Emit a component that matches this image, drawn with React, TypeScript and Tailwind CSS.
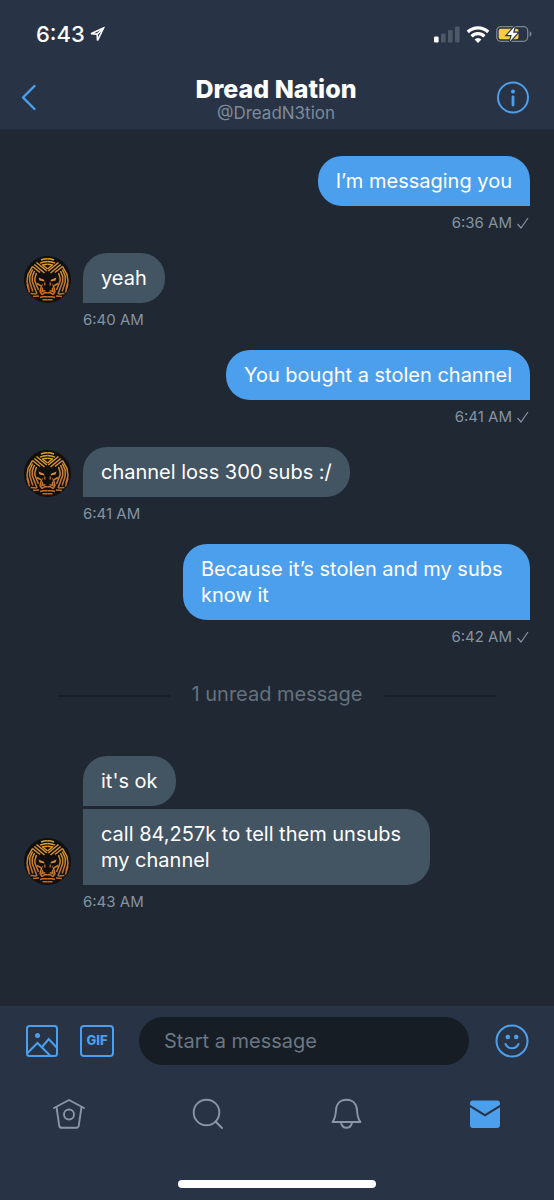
import { useId } from 'react';
import type { ReactNode } from 'react';
import clsx from 'clsx';

type Group = {
  from: 'me' | 'them';
  time: string;
  texts: string[];
};

const earlier: Group[] = [
  { from: 'me', time: '6:36 AM', texts: ['I’m messaging you'] },
  { from: 'them', time: '6:40 AM', texts: ['yeah'] },
  { from: 'me', time: '6:41 AM', texts: ['You bought a stolen channel'] },
  { from: 'them', time: '6:41 AM', texts: ['channel loss 300 subs :/'] },
  { from: 'me', time: '6:42 AM', texts: ['Because it’s stolen and my subs know it'] },
];

const unread: Group[] = [
  { from: 'them', time: '6:43 AM', texts: ["it's ok", 'call 84,257k to tell them unsubs my channel'] },
];

function LionAvatar() {
  const id = useId();
  const half = (
    <g fill="none" stroke={`url(#${id})`} strokeWidth="1.500">
      {/* crown */}
      <path d="M23.500 2.800c-2.500 0-4.500.4-6.500 1.200M23.500 5.500c-2.800 0-5 .5-7.500 1.600M23.500 8.200c-1.800 0-3 .2-4.500.7" />
      <path d="M12.500 6.500 22.800 15M10.300 8.500 20.500 17M18 8.500l5.500 4.500" />
      {/* mane */}
      <path d="M8.500 10.500 16 16.500M8.500 10.500 4 18.500l-1 7 2 8" />
      <path d="M8.600 13.500 5.800 20v6l3 9.500M10.500 15 8.300 20.500v5L13 38M12.500 17l-1.600 5v3l3.600 9" />
      <path d="M3 28l2.500 8.500M6.500 37.500l6 .5M9 40.500l6-.5" />
      {/* cheeks and chin */}
      <path d="M13 27.500 17.500 30l-1.500 5.500 2 3M19 27.500v4l-1 4 5.500-1.500M18 38.500l2.500-1.700h3M16 41.500l3-.8h4.500M18.500 43.700h5" />
    </g>
  );
  return (
    <svg viewBox="0 0 47 47" className="size-[47px] shrink-0" role="img" aria-label="Dread Nation">
      <defs>
        <linearGradient id={id} gradientUnits="userSpaceOnUse" x1="32" y1="3" x2="14" y2="44">
          <stop offset="0" stopColor="#e0a52e" />
          <stop offset="0.5" stopColor="#d28a30" />
          <stop offset="1" stopColor="#bd6429" />
        </linearGradient>
      </defs>
      <circle cx="23.500" cy="23.500" r="23.500" fill="#11100f" />
      {half}
      <g transform="matrix(-1 0 0 1 47 0)">{half}</g>
      {/* brow, bridge and nose */}
      <path
        d="M14 16.500 19.500 19l4 1.500 4-1.500 5.500-2.500 1 4.500-1.500 5-4.500 2 1 3-3 3.500-2.500 1-2.500-1-3-3.500 1-3-4.500-2-1.500-5z"
        fill="#100e0e"
      />
      <path d="m14.500 21.500 5.500 2.200.5 1.800-5-1zM32.500 21.500 27 23.700l-.5 1.800 5-1z" fill="#d98d31" />
      <path d="M20.800 26.500v3M26.200 26.500v3" stroke="#c8742a" strokeWidth="1.200" />
    </svg>
  );
}

function Bubble({ mine, joined, children }: { mine: boolean; joined: boolean; children: ReactNode }) {
  return (
    <p
      className={clsx(
        'max-w-[347px] rounded-3xl px-[18px] py-3 text-xl leading-[26px] text-white',
        mine ? 'rounded-br-none bg-[#4c9fec]' : 'rounded-bl-none bg-[#435463]',
        joined && 'rounded-tl-none',
      )}
    >
      {children}
    </p>
  );
}

function MessageGroup({ group }: { group: Group }) {
  const mine = group.from === 'me';
  return (
    <li className={clsx('flex flex-col gap-[7px]', mine && 'items-end')}>
      <div className="flex items-end gap-3">
        {!mine && <LionAvatar />}
        <div className="flex flex-col items-start gap-[3px]">
          {group.texts.map((text, i) => (
            <Bubble key={text} mine={mine} joined={i > 0}>
              {text}
            </Bubble>
          ))}
        </div>
      </div>
      <div className={clsx('flex items-center gap-1 text-[15px] leading-5 text-[#8593a1]', !mine && 'pl-[59px]')}>
        <time>{group.time}</time>
        {mine && (
          <svg viewBox="0 0 14 14" className="size-3.5" fill="none" stroke="currentColor" strokeWidth="1.200" aria-label="Sent">
            <path d="m1.500 8 3.500 4L12 2" />
          </svg>
        )}
      </div>
    </li>
  );
}

function StatusBar() {
  return (
    <div className="flex h-7 items-center justify-between pl-9 pr-[22px] text-white">
      <div className="flex items-center gap-1">
        <span className="text-[22px] font-medium leading-7">6:43</span>
        <svg viewBox="0 0 16 16" className="size-4" fill="none" stroke="currentColor" strokeWidth="1.600">
          <path d="M14.500 2 2 7.800l6.200.3.300 6.400z" />
          <path d="M14 2.500 8.400 8" />
        </svg>
      </div>
      <div className="flex items-center gap-1.5">
        <svg viewBox="0 0 26 17" className="h-[17px] w-[26px]" fill="currentColor">
          <rect y="10.500" width="4.600" height="6" rx="1.200" />
          <g fill="#4d5867">
            <rect x="7" y="7.500" width="4.600" height="9" rx="1.200" />
            <rect x="14" y="4" width="4.600" height="12.500" rx="1.200" />
            <rect x="21" y=".5" width="4.600" height="16" rx="1.200" />
          </g>
        </svg>
        <svg viewBox="0 0 24 17" className="h-[17px] w-6" fill="none" stroke="currentColor" strokeWidth="3.200">
          <path d="M1.800 6a14.500 14.500 0 0 1 20.400 0" />
          <path d="M5.600 10.300a9 9 0 0 1 12.800 0" />
          <path d="M8.600 13.500a4.600 4.600 0 0 1 6.800 0L12 16.900z" fill="currentColor" stroke="none" />
        </svg>
        <svg viewBox="0 0 36 18" className="h-[18px] w-9">
          <rect x=".7" y="1.700" width="31" height="14.600" rx="4" fill="none" stroke="#7b8490" strokeWidth="1.300" />
          <path d="M33.600 6.300c1.200.4 1.900 1.400 1.900 2.700s-.7 2.300-1.900 2.700z" fill="#7b8490" />
          <rect x="2.700" y="3.700" width="19.800" height="10.600" rx="2" fill="#f8cd3e" />
          <path
            d="M18.800 1.500 11.200 10h4.600l-2 6.500 7.900-8.700h-4.700z"
            fill="#fff"
            stroke="#283445"
            strokeWidth="2.400"
            paintOrder="stroke"
          />
        </svg>
      </div>
    </div>
  );
}

function ChatHeader() {
  return (
    <header className="border-b border-[#222d3a] bg-[#283445] pt-5 pb-1.5">
      <StatusBar />
      <div className="mt-[27px] flex items-start justify-between pl-5 pr-6">
        <button type="button" aria-label="Back" className="mt-2 flex w-9 text-[#4c9fec]">
          <svg viewBox="0 0 18 28" className="h-7 w-[18px]" fill="none" stroke="currentColor" strokeWidth="2.400" strokeLinecap="round" strokeLinejoin="round">
            <path d="M14.500 3 3 14.500 14.500 26" />
          </svg>
        </button>
        <div className="text-center">
          <h1 className="text-[25px] font-extrabold leading-7 text-white">Dread Nation</h1>
          <p className="text-[17px] leading-5 text-[#7d8a99]">@DreadN3tion</p>
        </div>
        <button type="button" aria-label="Conversation info" className="mt-1.5 flex text-[#4c9fec]">
          <svg viewBox="0 0 34 34" className="size-[34px]" fill="none" stroke="currentColor" strokeWidth="2">
            <circle cx="17" cy="16.500" r="15" />
            <circle cx="17" cy="10.500" r="2" fill="currentColor" stroke="none" />
            <path d="M17 16v8" strokeWidth="2.800" strokeLinecap="round" />
          </svg>
        </button>
      </div>
    </header>
  );
}

function Composer() {
  return (
    <form className="flex items-center pl-[25px] pr-6">
      <button type="button" aria-label="Add photo" className="text-[#4c9fec]">
        <svg viewBox="0 0 34 34" className="size-[34px]" fill="none" stroke="currentColor" strokeWidth="2">
          <rect x="2" y="2" width="30" height="30" rx="2.500" />
          <circle cx="12.500" cy="11.500" r="2.500" fill="currentColor" stroke="none" />
          <path d="M2.500 29 12.500 19 25 31.500M17.500 22.500l6.200-7.500 8 8.500" />
        </svg>
      </button>
      <button
        type="button"
        className="ml-[21px] flex h-8 w-[34px] items-center justify-center rounded-[4px] border-2 border-[#4c9fec] text-[13px] font-extrabold text-[#4c9fec]"
      >
        GIF
      </button>
      <input
        type="text"
        aria-label="Start a message"
        placeholder="Start a message"
        className="ml-[25px] h-12 min-w-0 flex-1 rounded-full bg-[#161d25] px-[25px] text-xl text-white outline-none placeholder:text-[#6b7784]"
      />
      <button type="button" aria-label="Emoji" className="ml-[25px] text-[#4c9fec]">
        <svg viewBox="0 0 36 36" className="size-9" fill="none" stroke="currentColor" strokeWidth="2">
          <circle cx="18" cy="18" r="15.500" />
          <circle cx="13.800" cy="14" r="2.300" fill="currentColor" stroke="none" />
          <circle cx="22.200" cy="14" r="2.300" fill="currentColor" stroke="none" />
          <path d="M11.500 21c1.500 3 3.700 4.300 6.500 4.300s5-1.300 6.500-4.300" strokeLinecap="round" />
        </svg>
      </button>
    </form>
  );
}

function TabBar() {
  return (
    <nav className="mt-8 grid grid-cols-4 justify-items-center text-[#8996a6]">
      <a href="#home" aria-label="Home">
        <svg viewBox="0 0 34 34" className="size-[34px]" fill="none" stroke="currentColor" strokeWidth="1.900" strokeLinecap="round" strokeLinejoin="round">
          <path d="M2 11 17 3l15 8" />
          <path d="M4.500 10 7.200 28.500q.3 2.300 2.300 2.300h15q2 0 2.300-2.300L29.500 10" />
          <circle cx="17" cy="17.500" r="5" />
        </svg>
      </a>
      <a href="#search" aria-label="Search">
        <svg viewBox="0 0 34 34" className="size-[34px]" fill="none" stroke="currentColor" strokeWidth="1.900" strokeLinecap="round">
          <circle cx="15.500" cy="15.500" r="12.800" />
          <path d="m24.500 24.500 6.500 6.500" />
        </svg>
      </a>
      <a href="#notifications" aria-label="Notifications">
        <svg viewBox="0 0 34 34" className="size-[34px]" fill="none" stroke="currentColor" strokeWidth="1.900" strokeLinecap="round" strokeLinejoin="round">
          <path d="M3.500 25c3-3.500 3.200-7 3.500-12C7.400 6.500 11.500 2.700 17.500 2.700S27.600 6.500 28 13c.3 5 .5 8.500 3.500 12z" />
          <path d="M12 25.500c.5 3.500 2.500 5.300 5.500 5.300s5-1.800 5.500-5.300" />
        </svg>
      </a>
      <a href="#messages" aria-label="Messages" className="text-[#4c9fec]">
        <svg viewBox="0 0 34 34" className="size-[34px]" fill="currentColor">
          <path d="M5 3.500h24a3 3 0 0 1 3 3v1.200L17 17 2 7.700V6.500a3 3 0 0 1 3-3z" />
          <path d="m2 10.200 15 9.300 15-9.300V28a3 3 0 0 1-3 3H5a3 3 0 0 1-3-3z" />
        </svg>
      </a>
    </nav>
  );
}

export default function App() {
  return (
    <div className="flex min-h-screen flex-col bg-[#1f2833] font-['Inter','Liberation_Sans',sans-serif]">
      <ChatHeader />

      <main className="flex-1 px-6 pt-[26px]">
        <ul className="flex flex-col gap-5">
          {earlier.map((group, i) => (
            <MessageGroup key={i} group={group} />
          ))}
        </ul>

        <div className="mt-[33px] mb-12 flex items-center justify-center gap-[22px] px-[34px]">
          <span className="mt-1 h-0.5 flex-1 bg-[#171f28]" />
          <h2 className="text-xl leading-7 text-[#66717e]">1 unread message</h2>
          <span className="mt-1 h-0.5 flex-1 bg-[#171f28]" />
        </div>

        <ul className="flex flex-col gap-5">
          {unread.map((group, i) => (
            <MessageGroup key={i} group={group} />
          ))}
        </ul>
      </main>

      <footer className="bg-[#283445] pt-[11px] pb-3">
        <Composer />
        <TabBar />
        <div className="mx-auto mt-[49px] h-2 w-[198px] rounded-full bg-white" />
      </footer>
    </div>
  );
}
